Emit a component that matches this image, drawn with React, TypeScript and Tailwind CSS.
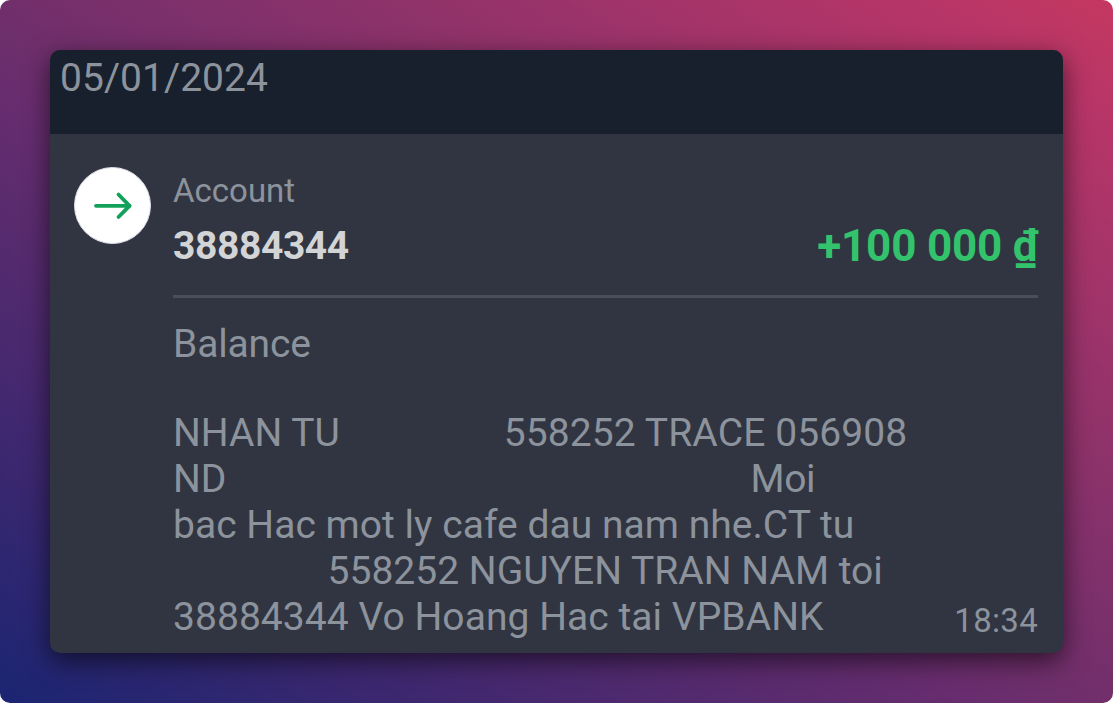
import React from 'react';

const lines = [
  [
    { text: 'NHAN TU', className: 'ml-0' },
    { text: '558252 TRACE 056908', className: 'ml-[164px] tracking-[0.1px]' },
  ],
  [
    { text: 'ND', className: 'ml-0' },
    { text: 'Moi', className: 'ml-[524px] tracking-[-0.3px]' },
  ],
  [{ text: 'bac Hac mot ly cafe dau nam nhe.CT tu', className: 'ml-0 tracking-[0.03px]' }],
  [{ text: '558252 NGUYEN TRAN NAM toi', className: 'ml-[154.5px] tracking-[0.02px]' }],
  [{ text: '38884344 Vo Hoang Hac tai VPBANK', className: 'ml-0 tracking-[0.05px]' }],
];

const App: React.FC = () => {
  return (
    <div className="w-[1113px] h-[703px] bg-white">
      <div className="w-full h-full p-[50px] rounded-[10px] overflow-hidden bg-[linear-gradient(to_top_right,#1b2572_0%,#43286f_22%,#682d6e_44%,#712f6b_50%,#96336a_72%,#b53568_90%,#c43861_100%)] font-['Roboto',sans-serif]">
        <div className="w-[1013px] h-[603px] rounded-[10px] overflow-hidden bg-[#313541] shadow-[0_8px_26px_rgba(0,0,0,0.6)] flex flex-col">
          {/* Date header */}
          <div className="h-[84px] shrink-0 bg-[#181f2d] pl-[10px] pt-[5px]">
            <div className="text-[39px] leading-[46px] text-[#8c939c] tracking-[0.05px] whitespace-nowrap">05/01/2024</div>
          </div>

          <div className="flex flex-1 pl-[24px] pr-[25px]">
            <div className="mt-[33px] w-[77px] h-[77px] shrink-0 rounded-full bg-white border border-[#dfe0e8] flex items-center justify-center">
              <svg
                width="40"
                height="30"
                viewBox="0 0 40 30"
                fill="none"
                stroke="#12a158"
                strokeWidth="3.8"
                strokeLinecap="round"
                strokeLinejoin="round"
              >
                <path d="M3 14.8H36.5" />
                <path d="M25.5 3.5L36.5 14.8L25.5 26" />
              </svg>
            </div>

            <div className="ml-[22px] flex-1 flex flex-col">
              {/* Account */}
              <div className="mt-[37px] text-[33px] leading-[40px] text-[#8c939c]">Account</div>
              <div className="h-[50px] mt-[10px] flex items-center justify-between font-bold whitespace-nowrap">
                <span className="text-[39px] tracking-[-0.4px] text-[#d3d4d6]">38884344</span>
                <span className="text-[44px] tracking-[-0.2px] text-[#32c36c]">+100 000 ₫</span>
              </div>
              <div className="mt-[24px] h-[3px] bg-[#4a4e59]" />

              {/* Balance */}
              <div className="mt-[23px] text-[39px] leading-[46px] tracking-[-0.15px] text-[#8c939c]">Balance</div>
              <div className="mt-[43px] flex justify-between items-end">
                <div className="text-[39px] leading-[46px] text-[#8c939c]">
                  {lines.map((line, index) => (
                    <div key={index} className="flex whitespace-nowrap">
                      {line.map((part) => (
                        <span key={part.text} className={part.className}>
                          {part.text}
                        </span>
                      ))}
                    </div>
                  ))}
                </div>
                <div className="-mb-px text-[33px] leading-[40px] tracking-[0.3px] text-[#8c939c]">18:34</div>
              </div>
            </div>
          </div>
        </div>
      </div>
    </div>
  );
};

export default App;
